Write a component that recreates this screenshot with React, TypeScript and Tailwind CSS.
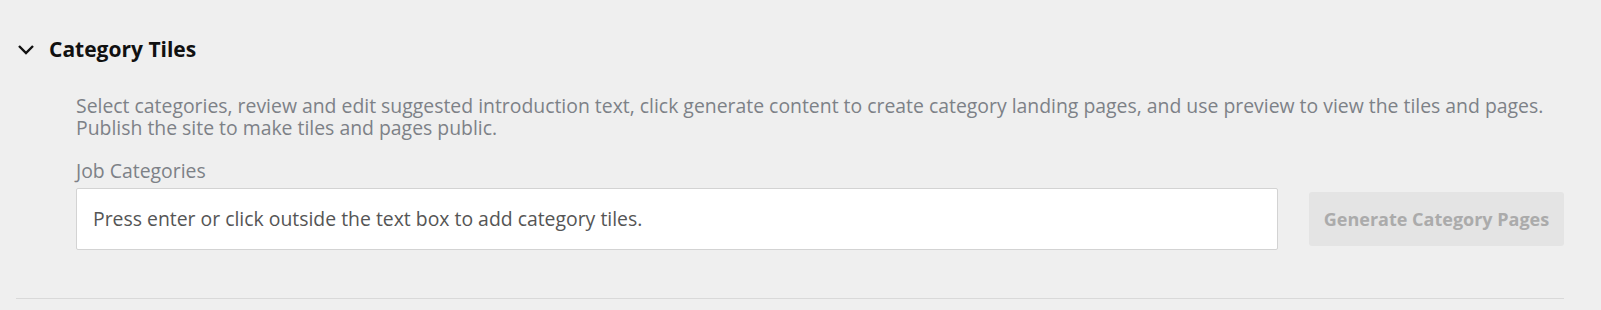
import React from "react";

export default function App() {
  return (
    <div className="min-h-[310px] w-full bg-[#efefef] font-['Open_Sans',sans-serif]">
      <div className="pt-[35px]">
        <div className="flex items-center h-[28px]">
          <svg className="ml-[17px] w-[18px] h-[12px]" viewBox="0 0 18 12" fill="none">
            <path d="M2 3 L9 10 L16 3" stroke="#111" strokeWidth="2.4" />
          </svg>
          <h2 className="ml-[14px] text-[21px] font-bold text-[#111] leading-[28px]">Category Tiles</h2>
        </div>
        <div className="pl-[76px] pr-[37px] mt-[32px]">
          <p className="text-[19.4px] leading-[22px] text-[#7d8187]">
            Select categories, review and edit suggested introduction text, click generate content to create category landing pages, and use preview to view the tiles and pages. Publish the site to make tiles and pages public.
          </p>
          <div className="mt-[21px] text-[19.4px] leading-[22px] text-[#7d8187]">Job Categories</div>
          <div className="mt-[6px] flex items-center">
            <div className="flex-1 h-[62px] bg-white border border-[#d3d3d3] rounded-[2px] flex items-center pl-[16px] text-[19.4px] text-[#555]">
              Press enter or click outside the text box to add category tiles.
            </div>
            <button className="ml-[31px] w-[255px] h-[54px] bg-[#e4e4e4] rounded-[3px] text-[18px] font-bold text-[#ababab]">
              Generate Category Pages
            </button>
          </div>
        </div>
        <div className="mt-[48px] ml-[16px] mr-[37px] h-px bg-[#d9d9d9]" />
      </div>
    </div>
  );
}
